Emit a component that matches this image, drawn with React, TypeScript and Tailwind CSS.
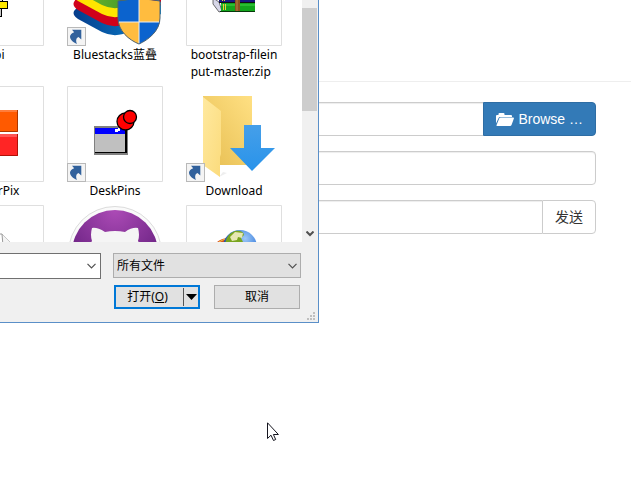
import type { ReactNode } from 'react';

function ShortcutBadge() {
  return (
    <svg className="absolute bottom-0 left-0 size-[19px]" viewBox="0 0 19 19" aria-hidden="true">
      <rect x="0.5" y="0.5" width="18" height="18" fill="#f4f4f4" stroke="#b9b9b9" />
      <path d="M5 2.800H14.300V12.500L11.500 10C9 11 8.500 14 10 17 6 15.500 3 12.500 3 9.500 3.200 7.500 4.800 6 7.200 5.200z" fill="#31619c" />
    </svg>
  );
}

type FileProps = { name: ReactNode; framed?: boolean; shortcut?: boolean; children: ReactNode };

function FileItem({ name, framed = true, shortcut = false, children }: FileProps) {
  return (
    <li className="w-24 text-center text-xs leading-[17px] whitespace-nowrap">
      <div className={framed ? 'relative size-24 rounded-[1px] shadow-[inset_0_0_0_1px_#dfdfdf]' : 'relative size-24'}>
        {children}
        {shortcut && <ShortcutBadge />}
      </div>
      <span className="inline-block text-left align-top">{name}</span>
    </li>
  );
}

function ApiIcon() {
  return (
    <svg className="size-24" viewBox="-52 -50 96 96" aria-hidden="true" shapeRendering="crispEdges">
      <path d="M-12-8H3V2H-12z" fill="#000" />
      <path d="M-10 1H8V9H-10z" fill="#000" />
      <path d="M-10 2H7V8H-10z" fill="#ffe800" />
      <path d="M-5 9H2V17H-5z" fill="#000" />
      <path d="M-4 9H1V16H-4z" fill="#c8c8c8" />
      <path d="M-2-2H2V1H-2z" fill="#ddd" />
    </svg>
  );
}

function BluestacksIcon() {
  return (
    <svg className="size-24" viewBox="67 -50 96 96" aria-hidden="true">
      <defs>
        <linearGradient id="bsBlue"><stop stopColor="#063c8b" /><stop offset="1" stopColor="#0a8ad5" /></linearGradient>
        <linearGradient id="bsGreen"><stop stopColor="#78b82b" /><stop offset="1" stopColor="#258b28" /></linearGradient>
        <clipPath id="shield"><path d="M118 1q11 0 21-6q10 6 21 6v17c0 13-12 22-21 26-10-4-21-13-21-26z" /></clipPath>
      </defs>
      <path d="M74 11q-2 4 4 8l24 13q10 5 21 2l38-20V0H84z" fill="url(#bsBlue)" />
      <path d="M74 2q-2 4 4 8l24 13q10 5 21 2l38-20V-8H80z" fill="#d0021b" />
      <path d="M74-8q-2 5 4 9l24 13q10 5 21 2l38-20V-18H78z" fill="#ffe500" />
      <path d="M74-17q-2 4 4 9l24 13q10 5 21 2l38-20V-27L112-45z" fill="url(#bsGreen)" />
      <path d="M146-6l12 6 1 5-10-3z" fill="#d0021b" />
      <path d="M155-4l6 7-1 3z" fill="#12a9d4" />
      <g clipPath="url(#shield)">
        <path d="M116-6h23v28h-23z" fill="#0b63ce" />
        <path d="M139-6h22v28h-22z" fill="#ffbc3f" />
        <path d="M116 22h23v24h-23z" fill="#ffbc3f" />
        <path d="M139 22h22v24h-22z" fill="#0b63ce" />
        <path d="M139-6v52M116 22h46" stroke="#e9eef2" />
      </g>
      <path d="M118 1q11 0 21-6q10 6 21 6v17c0 13-12 22-21 26-10-4-21-13-21-26z" fill="none" stroke="#4c6272" />
    </svg>
  );
}

function ArchiveIcon() {
  return (
    <svg className="size-24" viewBox="186 -50 96 96" aria-hidden="true">
      <path d="M215-20h40V-9h-40z" fill="#a01b6a" />
      <path d="M219-9h36V2h-36z" fill="#17177e" />
      <path d="M213-2l6 4 3 9-3 1-6-8z" fill="#d7d7e8" stroke="#333" strokeWidth="0.7" />
      <path d="M221 3h34v8.500h-34z" fill="#12a51d" />
      <path d="M220 11.500h35" stroke="#07380a" />
      <path d="M221 5h34" stroke="#42d449" />
      <path d="M219 2.500h36" stroke="#111" />
      <path d="M223.500 4v6M225.500 4v6M222.500-3v4M224.500-3v4" stroke="#f0cf3a" />
      <path d="M235-20h5V11h-5z" fill="#8c5120" />
      <path d="M237-20V11" stroke="#b5824b" />
    </svg>
  );
}

function ColorPixIcon() {
  return (
    <svg className="size-24" viewBox="-52 86 96 96" aria-hidden="true">
      <path d="M-26 110H18v22H-26z" fill="#ff5a00" />
      <path d="M-26 111H17" stroke="#ff7d3b" strokeWidth="2" />
      <path d="M-26 131.500H17.500V110" fill="none" stroke="#aa3600" />
      <path d="M-26 134H18v22H-26z" fill="#ff2525" />
      <path d="M-26 135.500H17" stroke="#ff5555" strokeWidth="3" />
      <path d="M-26 155.500H17.500V134" fill="none" stroke="#b01208" />
    </svg>
  );
}

function DeskPinsIcon() {
  return (
    <svg className="size-24" viewBox="67 86 96 96" aria-hidden="true">
      <g shapeRendering="crispEdges">
        <path d="M94 126h34v29H94z" fill="#808080" />
        <path d="M95 128h32v25H95z" fill="#000" />
        <path d="M95 128h30v24H95z" fill="#c0c0c0" />
        <path d="M95 128h30v6H95z" fill="#00f" />
        <path d="M115 129h3v-1h2v3h-2v1h-3z" fill="#fff" />
      </g>
      <g fill="#f00" stroke="#000" strokeWidth="1.300">
        <circle cx="125.500" cy="121.500" r="8.500" />
        <circle cx="130" cy="117" r="6.500" />
      </g>
    </svg>
  );
}

function DownloadIcon() {
  return (
    <svg className="size-24" viewBox="186 86 96 96" aria-hidden="true">
      <defs>
        <linearGradient id="back" x1="0" y1="1" x2="1" y2="0"><stop stopColor="#e6bd50" /><stop offset="1" stopColor="#ffe083" /></linearGradient>
        <linearGradient id="flap" x1="0" y1="0" x2="1" y2="1"><stop stopColor="#ffe99f" /><stop offset="1" stopColor="#fbdb7c" /></linearGradient>
        <linearGradient id="arrow" x1="0" y1="0" x2="0" y2="1"><stop stopColor="#459fe9" /><stop offset="1" stopColor="#2993ea" /></linearGradient>
      </defs>
      <path d="M219 177l8-4-4-1z" fill="#eee" />
      <path d="M203 96h49v69h-49z" fill="url(#back)" />
      <path d="M203 97l18 14v43l-1 3v20l-17-12z" fill="url(#flap)" />
      <path d="M244 125h17v23h14l-23 23-22-23h14z" fill="url(#arrow)" />
    </svg>
  );
}

function DocumentIcon() {
  return (
    <svg className="size-24" viewBox="-52 205 96 96" aria-hidden="true">
      <path d="M-30 234H2l12 12v40H-30z" fill="#fff" stroke="#999" />
      <path d="M2 234l1 12h11" fill="#f4f4f4" stroke="#999" />
    </svg>
  );
}

function GithubIcon() {
  return (
    <svg className="size-24" viewBox="67 205 96 96" aria-hidden="true">
      <defs>
        <radialGradient id="purple" cx="0.5" cy="0" r="0.6"><stop stopColor="#ac4bb6" /><stop offset="1" stopColor="#74288a" /></radialGradient>
      </defs>
      <circle cx="115" cy="253" r="46.500" fill="#fafafa" stroke="#dcdcdc" />
      <circle cx="115" cy="253" r="43" fill="url(#purple)" />
      <path d="M92 228q5-1 13 4 10-2 20 0 7-5 13-4 2 7 0 13 5 7 3 17-5 17-26 17t-26-17q-2-10 3-17-2-6 0-13z" fill="#f5f5f5" />
    </svg>
  );
}

function GlobeIcon() {
  return (
    <svg className="size-24" viewBox="186 205 96 96" aria-hidden="true">
      <defs>
        <radialGradient id="sea" cx="0.650" cy="0.250" r="0.700"><stop stopColor="#9cc8f8" /><stop offset="0.600" stopColor="#3d7fdc" /><stop offset="1" stopColor="#173d90" /></radialGradient>
      </defs>
      <path d="M216 243q5-5 13-5l-3 6z" fill="#d8501e" />
      <path d="M219 242q4-3 9-3" stroke="#f2c744" fill="none" />
      <circle cx="240" cy="247" r="17" fill="url(#sea)" />
      <path d="M225 245q1-11 10-14 8-1 9 4l-3 3 2 4-5 4h-12z" fill="#79a51f" />
      <path d="M230 237l5-5 8 1-1 5-4-1-1 3-5 1z" fill="#e6e7b4" />
    </svg>
  );
}

function Chevron({ className }: { className: string }) {
  return (
    <svg className={className} viewBox="0 0 9 6" fill="none" aria-hidden="true">
      <path d="M0.500 0.800l4 4 4-4" stroke="currentColor" strokeWidth="1.200" />
    </svg>
  );
}

function FileDialog() {
  return (
    <section
      role="dialog"
      aria-label="打开"
      className="absolute -top-[50px] -left-[68px] w-[387px] border-r border-b border-[#5a8fc8] bg-[#f0f0f0] font-['Noto_Sans','Noto_Sans_CJK_SC',sans-serif] text-black"
    >
      <div className="flex h-[292px]">
        <ul className="grid flex-1 grid-cols-[repeat(3,96px)] content-start gap-x-[23px] gap-y-1.5 overflow-hidden bg-white pl-4">
          <FileItem name="api"><ApiIcon /></FileItem>
          <FileItem name="Bluestacks蓝叠" framed={false} shortcut><BluestacksIcon /></FileItem>
          <FileItem name={<>bootstrap-filein<br />put-master.zip</>}><ArchiveIcon /></FileItem>
          <FileItem name="ColorPix"><ColorPixIcon /></FileItem>
          <FileItem name="DeskPins" shortcut><DeskPinsIcon /></FileItem>
          <FileItem name="Download" framed={false} shortcut><DownloadIcon /></FileItem>
          <FileItem name=""><DocumentIcon /></FileItem>
          <FileItem name="" framed={false}><GithubIcon /></FileItem>
          <FileItem name=""><GlobeIcon /></FileItem>
        </ul>
        <div className="flex w-4 flex-col justify-between pt-[58px] pr-px" aria-hidden="true">
          <div className="h-[103px] bg-[#cdcdcd]" />
          <div className="flex h-[17px] items-center justify-center text-[#505050]">
            <svg className="h-[6px] w-2" viewBox="0 0 8 6" fill="none">
              <path d="M0.500 0.500l3.500 3.500 3.500-3.500" stroke="currentColor" strokeWidth="2" />
            </svg>
          </div>
        </div>
      </div>
      <div className="flex flex-col gap-1.5 pt-[11px] pr-[17px] pb-[13px] text-xs">
        <div className="flex gap-3">
          <div className="flex h-[26px] min-w-0 flex-1 items-center border border-[#707070] bg-white pr-1">
            <input aria-label="文件名" className="min-w-0 flex-1 px-1 outline-none" />
            <Chevron className="h-1.5 w-[9px] shrink-0 text-[#505050]" />
          </div>
          <div className="relative h-[25px] w-[188px] shrink-0">
            <select aria-label="文件类型" className="size-full appearance-none border border-[#adadad] bg-[#e1e1e1] px-[3px]">
              <option>所有文件</option>
            </select>
            <Chevron className="pointer-events-none absolute top-[10px] right-1 h-1.5 w-[9px] text-[#505050]" />
          </div>
        </div>
        <div className="flex justify-end gap-3.5 pr-px">
          <div className="flex h-6 w-[86px] items-center border-2 border-[#0078d7] bg-[#e1e1e1]">
            <button type="button" className="flex-1 pr-1">
              打开(<span className="underline">O</span>)
            </button>
            <button type="button" aria-label="打开选项" className="flex h-[18px] w-[15px] items-center justify-center border-l border-[#555]">
              <svg className="h-1.5 w-[11px]" viewBox="0 0 11 6" aria-hidden="true"><path d="M0 0h11L5.500 6z" /></svg>
            </button>
          </div>
          <button type="button" className="h-6 w-[86px] border border-[#adadad] bg-[#e1e1e1]">取消</button>
        </div>
      </div>
      <svg className="absolute right-[3px] bottom-0.5 size-2" viewBox="0 0 8 8" fill="#bfbfbf" aria-hidden="true">
        <path d="M6 0h2v2H6zM3 3h2v2H3zM6 3h2v2H6zM0 6h2v2H0zM3 6h2v2H3zM6 6h2v2H6z" />
      </svg>
    </section>
  );
}

const field = 'h-[34px] min-w-0 flex-1 border border-[#ccc] bg-white px-3 shadow-[inset_0_1px_1px_rgba(0,0,0,0.075)] outline-none';

export default function App() {
  return (
    <main className="relative min-h-screen overflow-hidden bg-white font-['Liberation_Sans','Noto_Sans_CJK_SC',sans-serif] text-sm text-[#333]">
      <header className="h-[82px] border-b border-[#eee]" />
      <form className="flex flex-col gap-[15px] pt-5 pr-[35px] pl-4">
        <div className="flex">
          <input aria-label="File" readOnly className={`${field} rounded-l border-r-0`} />
          <button type="button" className="flex h-[34px] items-center gap-1 rounded-r border border-[#2e6da4] bg-[#337ab7] px-3 text-white">
            <svg className="h-[13px] w-[18px]" viewBox="0 0 18 13" fill="currentColor" aria-hidden="true">
              <path d="M0 10.500V3q0-1 1-1h1.500V1q0-1 1-1h4q1 0 1 1v1H15q1 0 1 1v1H4q-1 0-1.400.9z" />
              <path d="M4.600 4.600h12.600q1 0 .7.900L15.500 12q-.4 1-1.400 1H1.200q-.9 0-.6-.9L3.200 5.500q.4-.9 1.400-.9z" />
            </svg>
            <span>Browse …</span>
          </button>
        </div>
        <div className="flex">
          <input aria-label="Text" className={`${field} rounded`} />
        </div>
        <div className="flex">
          <input aria-label="Message" className={`${field} rounded-l border-r-0`} />
          <button type="button" className="h-[34px] rounded-r border border-[#ccc] bg-white px-3">发送</button>
        </div>
      </form>
      <FileDialog />
      <svg className="pointer-events-none absolute top-[422px] left-[267px] h-[19px] w-3" viewBox="0 0 12 19" aria-hidden="true">
        <path d="M0.500 0.800v15.700l3.500-3.300 2.500 5.300 2.200-1-2.300-5h5z" fill="#fff" stroke="#15151f" />
      </svg>
    </main>
  );
}
